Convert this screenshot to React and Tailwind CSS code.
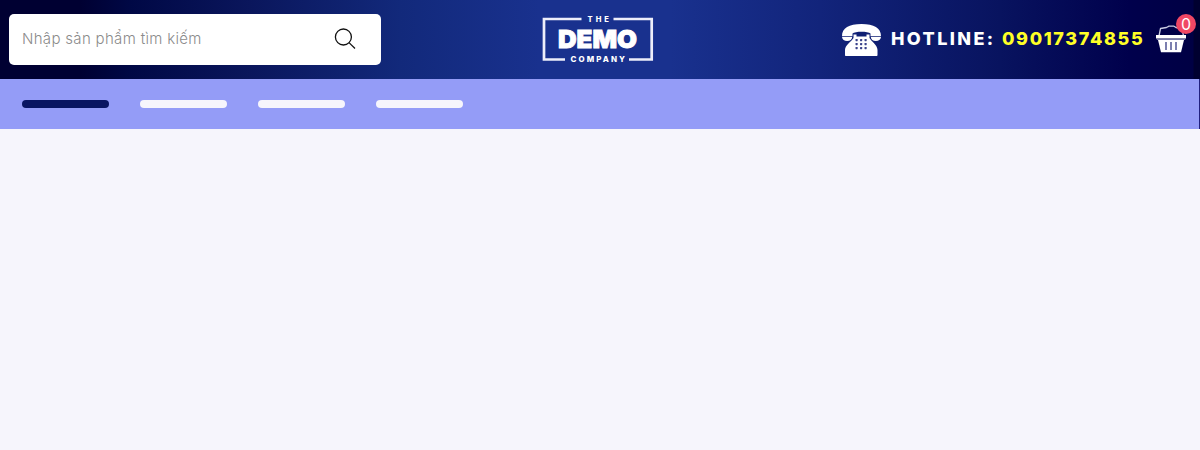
import React from "react";

function SearchIcon() {
  return (
    <svg className="h-6 w-6" viewBox="0 0 24 24" fill="none" stroke="#111" strokeWidth="1.3">
      <circle cx="10.4" cy="10" r="8" />
      <path d="M16 15.600l6 5.900" />
    </svg>
  );
}

function Logo() {
  return (
    <svg className="h-[50px] w-[114px]" viewBox="0 0 114 50" fill="#fff" fontFamily="Inter, sans-serif">
      <path
        d="M41.500 5H4v40.500h21M73.500 5h38.200v40.500H89"
        fill="none"
        stroke="#edeefa"
        strokeWidth="2.700"
      />
      <text x="47.500" y="7.800" fontSize="7.600" fontWeight="800" textLength="21.500" lengthAdjust="spacing">THE</text>
      <text x="18" y="33.500" fontSize="25" fontWeight="900" textLength="79" lengthAdjust="spacingAndGlyphs" stroke="#fff" strokeWidth="0.900">DEMO</text>
      <text x="30.500" y="48.200" fontSize="7.900" fontWeight="800" textLength="54.500" lengthAdjust="spacing">COMPANY</text>
    </svg>
  );
}

function PhoneIcon() {
  return (
    <svg className="h-8 w-10" viewBox="0 0 40 32">
      <path
        d="M0 12.200C0 4 7 0 19.500 0S39 4 39 12.200H28.500V9.500C26 7 13 7 10.500 9.500v2.700z"
        fill="#fff"
      />
      <path
        d="M0 13h10.200c-.3 2.800-2 4-5 4S.4 15.800 0 13zM28.800 13H39c-.4 2.800-2.200 4-5.200 4s-4.700-1.200-5-4z"
        fill="#fff"
      />
      <path
        d="M11.500 10.500h3v2h10v-2h3v3.500c2 3.500 8 7 8 12V31c0 .6-.4 1-1 1H4c-.6 0-1-.4-1-1v-5c0-5 6.500-8.500 8.500-12z"
        fill="#fff"
      />
      <g fill="#3b438c">
        <rect x="13.500" y="15" width="2.200" height="2.200" rx=".6" />
        <rect x="18" y="15" width="2.200" height="2.200" rx=".6" />
        <rect x="22.500" y="15" width="2.200" height="2.200" rx=".6" />
        <rect x="13.500" y="19" width="2.200" height="2.200" rx=".6" />
        <rect x="18" y="19" width="2.200" height="2.200" rx=".6" />
        <rect x="22.500" y="19" width="2.200" height="2.200" rx=".6" />
        <rect x="13.500" y="23" width="2.200" height="2.200" rx=".6" />
        <rect x="18" y="23" width="2.200" height="2.200" rx=".6" />
        <rect x="22.500" y="23" width="2.200" height="2.200" rx=".6" />
      </g>
    </svg>
  );
}

function BasketIcon() {
  return (
    <svg className="h-[30px] w-[30px]" viewBox="0 0 30 30">
      <path
        d="M3 12L4.500 4.500 10.500 3.500 13 2.200h5l2 1.300 6 1 1.500 7.500"
        fill="none"
        stroke="#c9cbe2"
        strokeWidth="1.300"
        strokeLinejoin="round"
      />
      <path d="M0 11h30v3.500H0z" fill="#fff" />
      <path d="M.8 14.800h28.400v1H.8z" fill="#9698bf" />
      <path d="M2 16h26l-3 12.200H5z" fill="#fff" />
      <path d="M10 18v8M15 18v8M20 18v8" stroke="#5c609c" strokeWidth="1.600" />
    </svg>
  );
}

const tabs = [true, false, false, false];

export default function App() {
  return (
    <div className="flex h-[450px] w-full flex-col overflow-hidden bg-[#f6f5fc] font-['Inter',sans-serif]">
      <header className="flex h-[79px] shrink-0 bg-[linear-gradient(90deg,#000032_0,#000032_80px,#000845_130px,#0a165c_250px,#12297b_400px,#19318e_540px,#19318e_670px,#12247b_820px,#08135f_1000px,#00004c_1130px,#000044_1193px,#000030_1194px,#000030_1200px)]">
        <form className="mt-3.5 ml-[9px] flex h-[51px] w-[372px] items-center rounded-[5px] bg-white pr-6 pb-0.5 pl-[13px]">
          <input
            type="text"
            placeholder="Nhập sản phẩm tìm kiếm"
            className="w-[310px] text-[15px] leading-5 font-light tracking-[0.32px] outline-none placeholder:text-[#8b8b8b] placeholder:opacity-100"
          />
          <button type="button" aria-label="Tìm kiếm" className="ml-px">
            <SearchIcon />
          </button>
        </form>
        <div className="mt-[14px] ml-[159px] h-[50px] w-[114px]">
          <Logo />
        </div>
        <div className="mt-6 ml-[188px] h-8 w-10">
          <PhoneIcon />
        </div>
        <p className="mt-[27px] ml-[9px] flex w-[254px] text-[18px] leading-6 font-extrabold whitespace-nowrap text-white">
          <span className="w-[111px] tracking-[2.4px]">HOTLINE:</span>
          <span className="tracking-[1.65px] text-[#ffff26]">09017374855</span>
        </p>
        <div className="relative mt-6 ml-[11px] h-[30px] w-[30px]">
          <BasketIcon />
          <span className="absolute -top-2.5 left-5 flex h-5 w-5 items-center justify-center rounded-full bg-[#f04764] text-base leading-5 text-white">
            0
          </span>
        </div>
      </header>
      <nav className="flex h-[50px] shrink-0 items-center gap-[31px] border-r border-[#202080] bg-[#949cf7] pl-[22px]">
        {tabs.map((active, i) => (
          <span
            key={i}
            className={active ? "h-2 w-[87px] rounded-full bg-[#091562]" : "h-2 w-[87px] rounded-full bg-[#f6f5fc]"}
          />
        ))}
      </nav>
      <main className="flex-1" />
    </div>
  );
}
